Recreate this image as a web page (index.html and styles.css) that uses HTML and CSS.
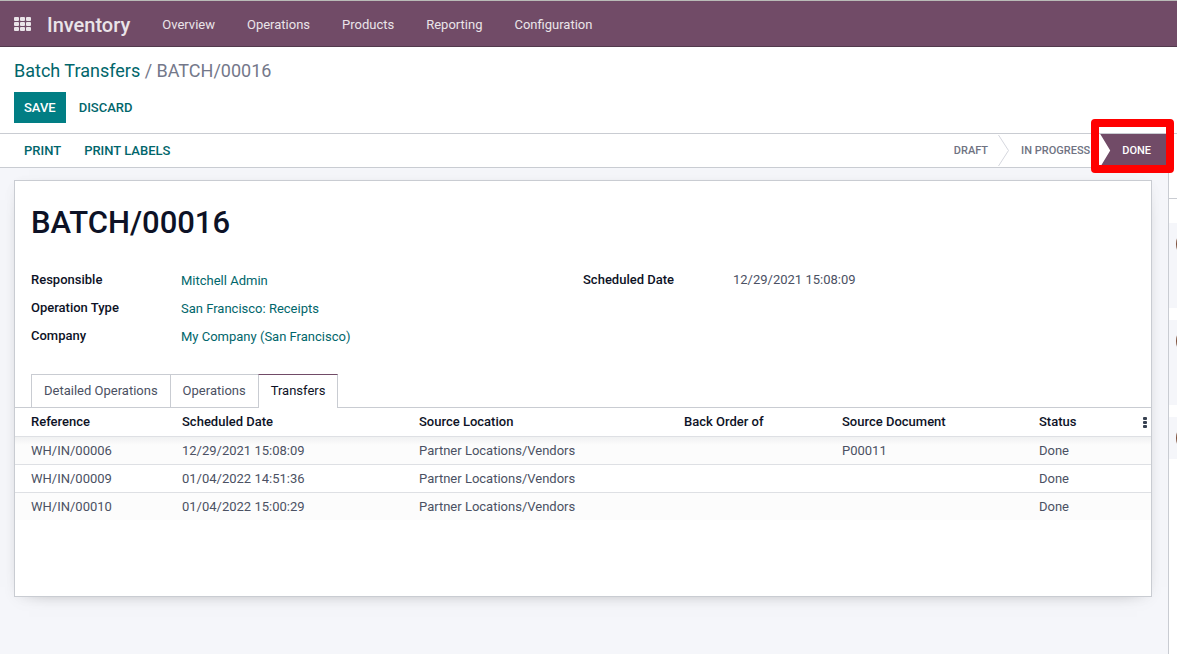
FILE: index.html
```
<!DOCTYPE html>
<html lang="en">
<head>
<meta charset="utf-8">
<title>BATCH/00016 - Inventory</title>
<link rel="stylesheet" href="styles.css">
</head>
<body>
<header class="navbar">
  <button class="apps" type="button" aria-label="Apps">
    <svg width="18" height="14" viewBox="0 0 18 14" fill="currentColor">
      <rect x="0" y="0" width="5" height="4" rx="1"/><rect x="6" y="0" width="5" height="4" rx="1"/><rect x="12" y="0" width="5" height="4" rx="1"/>
      <rect x="0" y="5" width="5" height="4" rx="1"/><rect x="6" y="5" width="5" height="4" rx="1"/><rect x="12" y="5" width="5" height="4" rx="1"/>
      <rect x="0" y="10" width="5" height="4" rx="1"/><rect x="6" y="10" width="5" height="4" rx="1"/><rect x="12" y="10" width="5" height="4" rx="1"/>
    </svg>
  </button>
  <a class="brand" href="#">Inventory</a>
  <nav class="menu">
    <a href="#">Overview</a>
    <a href="#">Operations</a>
    <a href="#">Products</a>
    <a href="#">Reporting</a>
    <a href="#">Configuration</a>
  </nav>
</header>

<div class="control-panel">
  <div class="breadcrumb"><a href="#">Batch Transfers</a> / <span>BATCH/00016</span></div>
  <div class="buttons">
    <button class="btn btn-primary" type="button">SAVE</button>
    <button class="btn" type="button">DISCARD</button>
  </div>
</div>

<div class="content">
  <main class="form-view">
    <div class="statusbar">
      <div class="buttons actions">
        <button class="btn" type="button">PRINT</button>
        <button class="btn" type="button">PRINT LABELS</button>
      </div>
      <div class="stages">
        <button class="stage" type="button">DRAFT</button>
        <svg class="chevron" width="11" height="33" viewBox="0 0 11 33" fill="none" stroke="#d5d7de"><path d="M0.5 1 10.5 16.5 0.5 32"/></svg>
        <button class="stage" type="button">IN PROGRESS</button>
        <div class="current">
          <button class="stage stage-done" type="button">DONE</button>
          <span class="highlight"></span>
        </div>
      </div>
    </div>

    <section class="sheet">
      <h1>BATCH/00016</h1>
      <div class="groups">
        <dl class="group">
          <dt>Responsible</dt><dd><a href="#">Mitchell Admin</a></dd>
          <dt>Operation Type</dt><dd><a href="#">San Francisco: Receipts</a></dd>
          <dt>Company</dt><dd><a href="#">My Company (San Francisco)</a></dd>
        </dl>
        <dl class="group">
          <dt>Scheduled Date</dt><dd class="plain">12/29/2021 15:08:09</dd>
        </dl>
      </div>
      <div class="tabs" role="tablist">
        <button class="tab" type="button" role="tab">Detailed Operations</button>
        <button class="tab" type="button" role="tab">Operations</button>
        <button class="tab active" type="button" role="tab" aria-selected="true">Transfers</button>
      </div>
      <table class="list">
        <colgroup><col class="c-ref"><col class="c-date"><col class="c-loc"><col class="c-back"><col class="c-doc"><col class="c-status"><col class="c-more"></colgroup>
        <thead>
          <tr>
            <th>Reference</th><th>Scheduled Date</th><th>Source Location</th><th>Back Order of</th><th>Source Document</th><th>Status</th>
            <th class="more"><button type="button" aria-label="Optional columns"><svg width="4" height="11" viewBox="0 0 4 11" fill="#374151"><rect width="4" height="3" rx="1"/><rect y="4" width="4" height="3" rx="1"/><rect y="8" width="4" height="3" rx="1"/></svg></button></th>
          </tr>
        </thead>
        <tbody>
          <tr><td>WH/IN/00006</td><td>12/29/2021 15:08:09</td><td>Partner Locations/Vendors</td><td></td><td>P00011</td><td>Done</td><td></td></tr>
          <tr><td>WH/IN/00009</td><td>01/04/2022 14:51:36</td><td>Partner Locations/Vendors</td><td></td><td></td><td>Done</td><td></td></tr>
          <tr><td>WH/IN/00010</td><td>01/04/2022 15:00:29</td><td>Partner Locations/Vendors</td><td></td><td></td><td>Done</td><td></td></tr>
        </tbody>
      </table>
    </section>
  </main>

  <aside class="chatter">
    <div class="topbar"></div>
    <div class="message"><span class="avatar"></span></div>
    <div class="message"><span class="avatar"></span></div>
    <div class="message short"><span class="avatar"></span></div>
  </aside>
</div>
</body>
</html>
```
FILE: styles.css
```
* { box-sizing: border-box; }

body {
  margin: 0;
  min-height: 100vh;
  display: flex;
  flex-direction: column;
  overflow: hidden;
  font: 13px/20px Roboto, "Liberation Sans", sans-serif;
  color: #4b5163;
  background: #fff;
}

a { color: #01666b; text-decoration: none; }
button { font: inherit; color: inherit; background: none; border: 0; padding: 0; margin: 0; cursor: pointer; }
svg { display: block; }

.navbar {
  display: flex;
  align-items: center;
  height: 47px;
  padding: 2px 14px 0;
  background: #714b67;
  border-top: 1px solid #b9bbb7;
  border-bottom: 1px solid #523a4d;
  color: #eae4e9;
}
.navbar a { color: inherit; }
.apps { margin: 0 15px 2px 0; }
.brand { font-size: 20px; font-weight: 500; }
.menu { display: flex; gap: 32px; margin-left: 32px; }

.control-panel {
  display: flex;
  flex-direction: column;
  gap: 9px;
  padding: 12px 14px 10px;
  border-bottom: 1px solid #c9ccd2;
}
.breadcrumb { font-size: 18px; line-height: 24px; color: #74788a; }
.buttons { display: flex; gap: 3px; }
.btn { height: 31px; padding: 0 10px; font-weight: 500; color: #01666b; }
.btn-primary { background: #017e84; color: #fff; }

.content { flex: 1; display: flex; }
.form-view { flex: 1; min-width: 0; background: #f5f6fa; }

.statusbar {
  display: flex;
  justify-content: space-between;
  height: 34px;
  padding-left: 14px;
  background: #fff;
  border-bottom: 1px solid #c9ccd2;
}
.actions { align-items: center; }
.stages { display: flex; font-size: 11px; font-weight: 500; color: #6f7382; }
.stage { padding: 0 10px 0 12px; }
.current { position: relative; display: flex; }
.stage-done {
  padding: 0 17px 0 22px;
  color: #fff;
  background: #714b67;
  clip-path: polygon(0 0, 100% 0, 100% 100%, 0 100%, 10px 50%);
}
.highlight {
  position: absolute;
  inset: -15px -6px -6px -9px;
  border: 8px solid #f00;
  border-radius: 4px;
  pointer-events: none;
}

.sheet {
  min-height: 417px;
  margin: 12px 16px 0 14px;
  padding: 0 16px;
  background: #fff;
  border: 1px solid #c9ccd2;
  box-shadow: 0 5px 20px -15px #00000080, 0 2px 12px -2px #0000000d;
}
h1 { margin: 22px 0 26px; font-size: 31px; line-height: 40px; font-weight: 500; color: #0d1226; }

.groups { display: grid; grid-template-columns: 1fr 1fr; }
.group { display: grid; grid-template-columns: 150px 1fr; grid-auto-rows: 28px; margin: 0; }
.group dt { padding-top: 1px; font-weight: 500; color: #0d1226; }
.group dd { margin: 0; padding-top: 2px; }
.group .plain { padding-top: 1px; }

.tabs { display: flex; margin-top: 21px; }
.tab {
  height: 33px;
  padding: 0 12px;
  border: 1px solid #c9ccd2;
  border-width: 1px 0 0 1px;
}
.tab.active {
  position: relative;
  height: 34px;
  margin-bottom: -1px;
  padding-bottom: 1px;
  border-width: 1px 1px 0;
  border-top-color: #714b67;
  background: #fff;
  color: #0d1226;
}

.list {
  width: calc(100% + 32px);
  margin: 0 -16px;
  border-collapse: separate;
  border-spacing: 0;
  table-layout: fixed;
  border-top: 1px solid #c9ccd2;
}
.c-ref { width: 163px; }
.c-date { width: 237px; }
.c-back { width: 158px; }
.c-doc { width: 197px; }
.c-status { width: 92px; }
.c-more { width: 24px; }
.list th, .list td { padding: 4px; text-align: left; line-height: 19px; white-space: nowrap; }
.list th:first-child, .list td:first-child { padding-left: 16px; }
.list th { padding-bottom: 5px; font-weight: 500; color: #0d1226; border-bottom: 1px solid #dee0e4; }
.list .more { padding: 0 4px; }
.more button { display: block; margin-left: auto; }
.list tbody tr + tr td { border-top: 1px solid #dee0e4; }
.list tbody tr:nth-child(odd) { background: #fcfcfc; }
.list tbody tr:first-child { background: linear-gradient(#f0f1f2, #fcfcfc 8px); }

.chatter { width: 9px; overflow: hidden; background: #fff; border-left: 1px solid #c9ccd2; }
.topbar { height: 65px; margin-bottom: 24px; border-bottom: 1px solid #c9ccd2; }
.message { height: 85px; margin-bottom: 12px; padding: 5px 0 0 7px; background: #f5f6fa; }
.message.short { height: 42px; }
.avatar { display: block; width: 32px; height: 32px; border-radius: 50%; background: #80533f; }
```
